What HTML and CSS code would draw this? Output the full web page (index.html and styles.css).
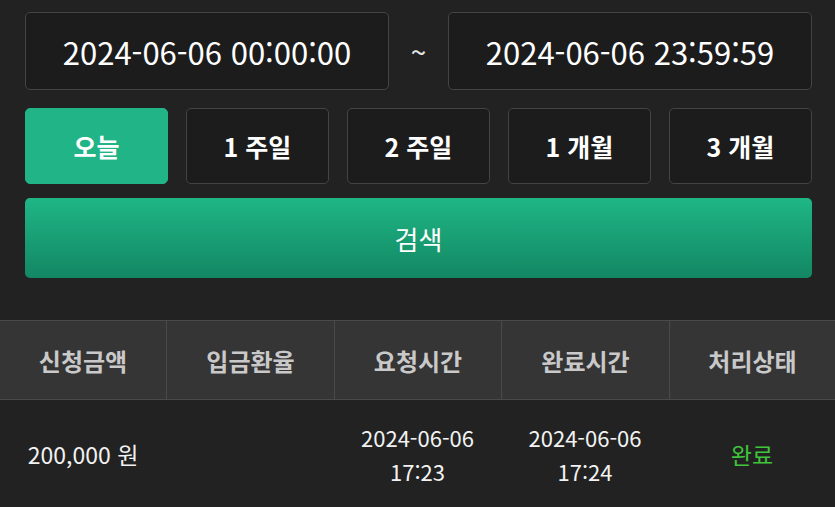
FILE: index.html
```html
<!DOCTYPE html>
<html lang="ko">
<head>
<meta charset="utf-8">
<link rel="stylesheet" href="styles.css">
</head>
<body>
<div class="page">
  <div class="filters">
    <div class="date-row">
      <div class="date-box">2024-06-06 00:00:00</div>
      <div class="tilde">~</div>
      <div class="date-box">2024-06-06 23:59:59</div>
    </div>
    <div class="range-row">
      <button class="range active">오늘</button>
      <button class="range">1 주일</button>
      <button class="range">2 주일</button>
      <button class="range">1 개월</button>
      <button class="range">3 개월</button>
    </div>
    <button class="search">검색</button>
  </div>
  <div class="table">
    <div class="thead">
      <div class="th">신청금액</div>
      <div class="th">입금환율</div>
      <div class="th">요청시간</div>
      <div class="th">완료시간</div>
      <div class="th">처리상태</div>
    </div>
    <div class="trow">
      <div class="td">200,000 원</div>
      <div class="td"></div>
      <div class="td">2024-06-06<br>17:23</div>
      <div class="td">2024-06-06<br>17:24</div>
      <div class="td status">완료</div>
    </div>
  </div>
</div>
</body>
</html>
```
FILE: styles.css
```css
html, body {
  margin: 0;
  padding: 0;
  background: #222222;
  font-family: "Noto Sans CJK KR", "Noto Sans", sans-serif;
  color: #ffffff;
}
.page {
  width: 835px;
  height: 507px;
  overflow: hidden;
}
.filters {
  padding: 12px 23px 0 25px;
  display: flex;
  flex-direction: column;
}
.date-row {
  display: flex;
  align-items: center;
  height: 78px;
}
.date-box {
  flex: 1;
  height: 78px;
  box-sizing: border-box;
  border: 1.5px solid #444444;
  border-radius: 5px;
  background: #1c1c1c;
  display: flex;
  align-items: center;
  justify-content: center;
  font-size: 31px;
  color: #ffffff;
}
.tilde {
  width: 59px;
  text-align: center;
  font-size: 28px;
  color: #e6e6e6;
}
.range-row {
  display: flex;
  gap: 18px;
  margin-top: 18px;
  height: 76px;
}
.range {
  flex: 1;
  box-sizing: border-box;
  border: 1.5px solid #444444;
  border-radius: 5px;
  background: #1c1c1c;
  color: #ffffff;
  font-family: inherit;
  font-weight: 700;
  font-size: 25px;
  padding: 0;
}
.range.active {
  background: #21b486;
  border-color: #21b486;
}
.search {
  margin-top: 14px;
  height: 80px;
  border: none;
  border-radius: 5px;
  background: linear-gradient(to bottom, #1fb685, #138763);
  color: #ffffff;
  font-family: inherit;
  font-size: 26px;
  padding: 0;
}
.table {
  margin-top: 42px;
}
.thead {
  display: grid;
  grid-template-columns: 166px 168px 167px 168px 166px;
  height: 80px;
  background: #353535;
  border-top: 1.5px solid #4a4a4a;
  border-bottom: 1.5px solid #4a4a4a;
  box-sizing: border-box;
}
.th {
  display: flex;
  align-items: center;
  justify-content: center;
  font-weight: 700;
  font-size: 24px;
  color: #c9c9c9;
  border-left: 1px solid #4a4a4a;
}
.th:first-child {
  border-left: none;
}
.trow {
  display: grid;
  grid-template-columns: 166px 168px 167px 168px 166px;
  height: 108px;
}
.td {
  display: flex;
  align-items: center;
  justify-content: center;
  text-align: center;
  font-size: 22px;
  line-height: 34px;
  color: #f2f2f2;
}
.td:first-child {
  font-size: 23px;
}
.status {
  color: #3fc43c;
  font-size: 23px;
}
```
